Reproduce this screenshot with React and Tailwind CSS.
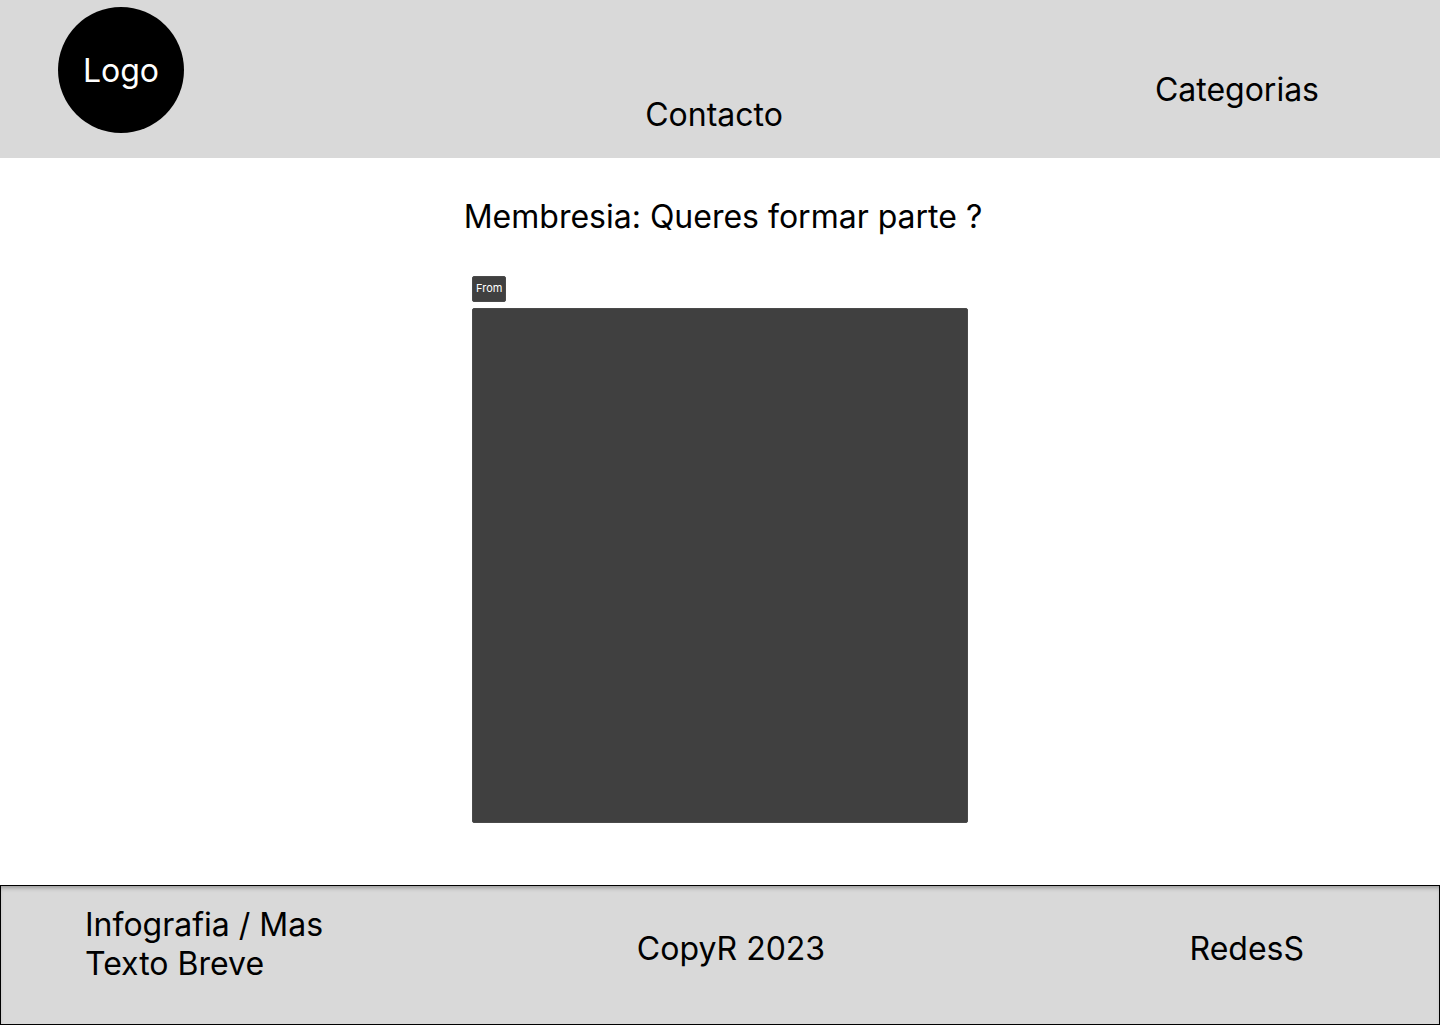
export default function App() {
  return (
    <div className="flex min-h-screen flex-col bg-white font-['Inter',sans-serif] text-[32px] leading-[39px] text-black">
      <header className="grid grid-cols-3 bg-[#d9d9d9] pt-[7px] pb-6">
        <a href="#inicio" className="ml-[58px] flex size-[126px] items-center justify-center rounded-full bg-black text-white">
          Logo
        </a>
        <a href="#contacto" className="mt-[88px] mr-3 self-start justify-self-center">Contacto</a>
        <a href="#categorias" className="mt-[63px] mr-[121px] self-start justify-self-end">Categorias</a>
      </header>
      <main className="flex flex-1 flex-col items-center pt-[39px] pb-[62px]">
        <h1 className="pl-[6px]">Membresia: Queres formar parte ?</h1>
        <form className="mt-10 flex w-full max-w-[496px] flex-col items-start gap-[6px]">
          <label htmlFor="from" className="rounded-xs border border-[#4a4a4a] bg-[#404040] px-[3px] pt-[3px] pb-[5px] text-[11px] leading-4 text-white">
            From
          </label>
          <textarea id="from" className="block h-[515px] w-full resize-none rounded-xs border border-[#4a4a4a] bg-[#404040] p-4 text-base text-white outline-none" />
        </form>
      </main>
      <footer className="grid grid-cols-3 border border-black bg-[#d9d9d9] pt-[19px] pb-[41px] shadow-[inset_0_4px_4px_-2px_rgba(0,0,0,0.3)]">
        <p className="pl-[84px]">
          Infografia / Mas
          <br />
          Texto Breve
        </p>
        <p className="mt-6 ml-[22px] justify-self-center">CopyR 2023</p>
        <a href="#redes" className="mt-6 mr-[135px] self-start justify-self-end">RedesS</a>
      </footer>
    </div>
  );
}
